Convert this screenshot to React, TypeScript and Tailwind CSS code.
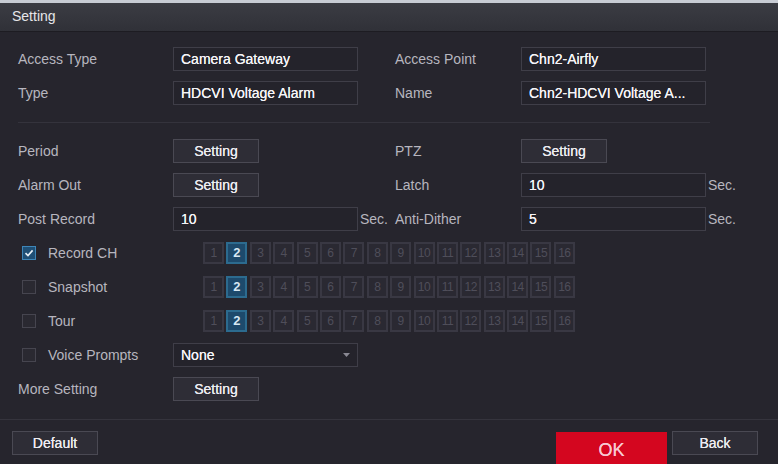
import type { ReactNode } from "react";

const font = "font-['Liberation_Sans',Arial,sans-serif]";
const channels = Array.from({ length: 16 }, (_, i) => i + 1);

function Field({ value, className = "w-[185px]" }: { value: string; className?: string }) {
  return (
    <div
      className={`flex h-[24px] items-center border border-[#3f3e48] bg-[#24232b] px-[7px] text-[14px] text-[#f4f3f7] [text-shadow:0_0_0.4px_#fff] ${className}`}
    >
      {value}
    </div>
  );
}

function SettingButton() {
  return (
    <div className="flex h-[24px] w-[86px] items-center justify-center border border-[#4a4953] bg-[#2e2d36] text-[14px] text-[#ecebf1] [text-shadow:0_0_0.4px_#fff]">
      Setting
    </div>
  );
}

function Label({ children, className = "w-[155px]" }: { children: ReactNode; className?: string }) {
  return <div className={`shrink-0 text-[14px] text-[#b7b6bf] ${className}`}>{children}</div>;
}

function Sec() {
  return <div className="w-[37px] shrink-0 pl-[2px] text-[14px] text-[#b7b6bf]">Sec.</div>;
}

function Checkbox({ checked }: { checked?: boolean }) {
  if (checked) {
    return (
      <div className="flex h-[14px] w-[14px] items-center justify-center border border-[#3e86b8] bg-[#1f4f75]">
        <svg width="10" height="10" viewBox="0 0 10 10">
          <path d="M1.5 5.2 L4 7.6 L8.6 2.4" fill="none" stroke="#e8f1f8" strokeWidth="1.6" />
        </svg>
      </div>
    );
  }
  return <div className="h-[14px] w-[14px] border border-[#46454f] bg-[#2a2931]" />;
}

function ChannelRow() {
  return (
    <div className="flex gap-[2.4px]">
      {channels.map((n) =>
        n === 2 ? (
          <div
            key={n}
            className="flex h-[22px] w-[21px] items-center justify-center border-2 border-[#2c6b8f] bg-[#1d4a6c] text-[13px] font-semibold text-[#d6e7f3]"
          >
            {n}
          </div>
        ) : (
          <div
            key={n}
            className="flex h-[22px] w-[21px] items-center justify-center border-2 border-[#393843] bg-[#2a2932] text-[12px] tracking-[-0.5px] text-[#4f4e5a]"
          >
            {n}
          </div>
        )
      )}
    </div>
  );
}

function CheckRow({ label, checked }: { label: string; checked?: boolean }) {
  return (
    <div className="flex h-[34px] items-center">
      <div className="flex w-[185px] shrink-0 items-center gap-[12px] pl-[4px]">
        <Checkbox checked={checked} />
        <span className="text-[14px] text-[#b7b6bf]">{label}</span>
      </div>
      <ChannelRow />
    </div>
  );
}

export default function App() {
  return (
    <div className={`flex h-[464px] w-[778px] flex-col overflow-hidden bg-[#26252d] ${font}`}>
      <div className="h-[3px] bg-[#c8ccd4]" />
      <div className="flex h-[30px] items-center border-b border-[#1d1c22] bg-gradient-to-b from-[#3b3c43] to-[#303138] px-[12px] text-[14px] text-[#e6e6ea]">
        Setting
      </div>

      <div className="flex flex-col px-[18px] pt-[10px]">
        <div className="flex h-[34px] items-center">
          <Label>Access Type</Label>
          <Field value="Camera Gateway" />
          <div className="w-[37px]" />
          <Label className="w-[126px]">Access Point</Label>
          <Field value="Chn2-Airfly" />
        </div>
        <div className="flex h-[34px] items-center">
          <Label>Type</Label>
          <Field value="HDCVI Voltage Alarm" />
          <div className="w-[37px]" />
          <Label className="w-[126px]">Name</Label>
          <Field value="Chn2-HDCVI Voltage A..." />
        </div>

        <div className="mt-[12px] h-px w-[692px] bg-[#34333c]" />

        <div className="mt-[11px] flex h-[34px] items-center">
          <Label>Period</Label>
          <div className="w-[185px]">
            <SettingButton />
          </div>
          <div className="w-[37px]" />
          <Label className="w-[126px]">PTZ</Label>
          <SettingButton />
        </div>
        <div className="flex h-[34px] items-center">
          <Label>Alarm Out</Label>
          <div className="w-[185px]">
            <SettingButton />
          </div>
          <div className="w-[37px]" />
          <Label className="w-[126px]">Latch</Label>
          <Field value="10" />
          <Sec />
        </div>
        <div className="flex h-[34px] items-center">
          <Label>Post Record</Label>
          <Field value="10" />
          <Sec />
          <Label className="w-[126px]">Anti-Dither</Label>
          <Field value="5" />
          <Sec />
        </div>

        <CheckRow label="Record CH" checked />
        <CheckRow label="Snapshot" />
        <CheckRow label="Tour" />

        <div className="flex h-[34px] items-center">
          <div className="flex w-[155px] shrink-0 items-center gap-[12px] pl-[4px]">
            <Checkbox />
            <span className="text-[14px] text-[#b7b6bf]">Voice Prompts</span>
          </div>
          <div className="flex h-[24px] w-[185px] items-center justify-between border border-[#3f3e48] bg-[#24232b] pl-[7px] pr-[7px] text-[14px] text-[#f4f3f7] [text-shadow:0_0_0.4px_#fff]">
            None
            <svg width="7" height="5" viewBox="0 0 7 5">
              <path d="M0 0 H7 L3.5 4 Z" fill="#8a8994" />
            </svg>
          </div>
        </div>
        <div className="flex h-[34px] items-center">
          <Label>More Setting</Label>
          <SettingButton />
        </div>
      </div>

      <div className="mt-[13px] h-px bg-[#35343d]" />

      <div className="flex flex-1 items-start px-[12px] pt-[11px]">
        <div className="flex h-[24px] w-[86px] items-center justify-center border border-[#4a4953] bg-[#2e2d36] text-[14px] text-[#ecebf1] [text-shadow:0_0_0.4px_#fff]">
          Default
        </div>
        <div className="ml-auto flex items-start gap-[5px] pr-[8px]">
          <div className="mt-[1px] flex h-[32px] w-[111px] items-center justify-center bg-[#d4061f] pt-[4px] text-[18px] text-[#f7c9cf] [text-shadow:0_0_0.5px_#fce]">
            OK
          </div>
          <div className="flex h-[24px] w-[86px] items-center justify-center border border-[#4a4953] bg-[#2e2d36] text-[14px] text-[#ecebf1] [text-shadow:0_0_0.4px_#fff]">
            Back
          </div>
        </div>
      </div>
    </div>
  );
}
